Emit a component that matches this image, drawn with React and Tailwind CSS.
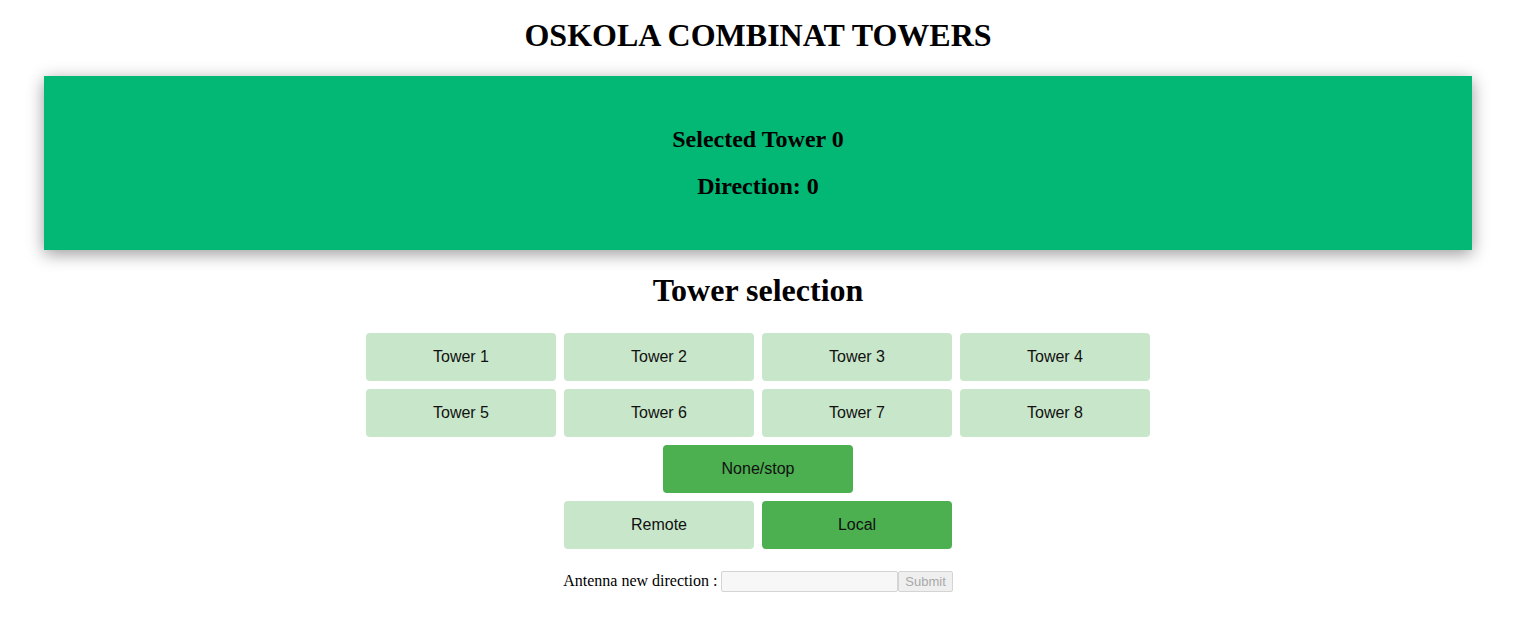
import React from 'react';

const serif = { fontFamily: '"Liberation Serif", "Times New Roman", serif' };

const TowerButton = ({ label, active }) => (
  <button
    className={`w-[190px] h-[48px] rounded-[4px] text-[16px] text-[#111] ${
      active ? 'bg-[#4caf50]' : 'bg-[#c8e6c9]'
    }`}
    style={{ fontFamily: '"Liberation Sans", Arial, sans-serif' }}
  >
    {label}
  </button>
);

const App = () => {
  const towers = [1, 2, 3, 4, 5, 6, 7, 8];

  return (
    <div className="w-[1516px] bg-white text-black" style={serif}>
      <h1 className="pt-[17px] text-center text-[32px] leading-[37px] font-bold">
        OSKOLA COMBINAT TOWERS
      </h1>

      <div className="mx-[44px] mt-[22px] flex flex-col items-center gap-[19px] bg-[#03b875] pt-[49px] pb-[50px] shadow-[0_4px_16px_rgba(0,0,0,0.4)]">
        <h2 className="text-[24px] leading-[28px] font-bold">Selected Tower 0</h2>
        <h2 className="text-[24px] leading-[28px] font-bold">Direction: 0</h2>
      </div>

      <h1 className="mt-[22px] text-center text-[32px] leading-[37px] font-bold">
        Tower selection
      </h1>

      <div className="mt-[24px] flex flex-col items-center gap-[8px]">
        <div className="grid grid-cols-4 gap-[8px]">
          {towers.map((t) => (
            <TowerButton key={t} label={`Tower ${t}`} />
          ))}
        </div>
        <TowerButton label="None/stop" active />
        <div className="flex gap-[8px]">
          <TowerButton label="Remote" />
          <TowerButton label="Local" active />
        </div>
      </div>

      <div className="mt-[20px] flex items-center justify-center text-[16px]">
        <span className="mr-[4px]">Antenna new direction :</span>
        <input
          disabled
          className="w-[177px] h-[21px] border border-[#d4d4d4] bg-[#f7f7f7] rounded-[2px]"
        />
        <button
          disabled
          className="h-[21px] px-[6px] border border-[#d4d4d4] bg-[#efefef] rounded-[2px] text-[13px] text-[#a8a8a8]"
          style={{ fontFamily: '"Liberation Sans", Arial, sans-serif' }}
        >
          Submit
        </button>
      </div>
    </div>
  );
};

export default App;
